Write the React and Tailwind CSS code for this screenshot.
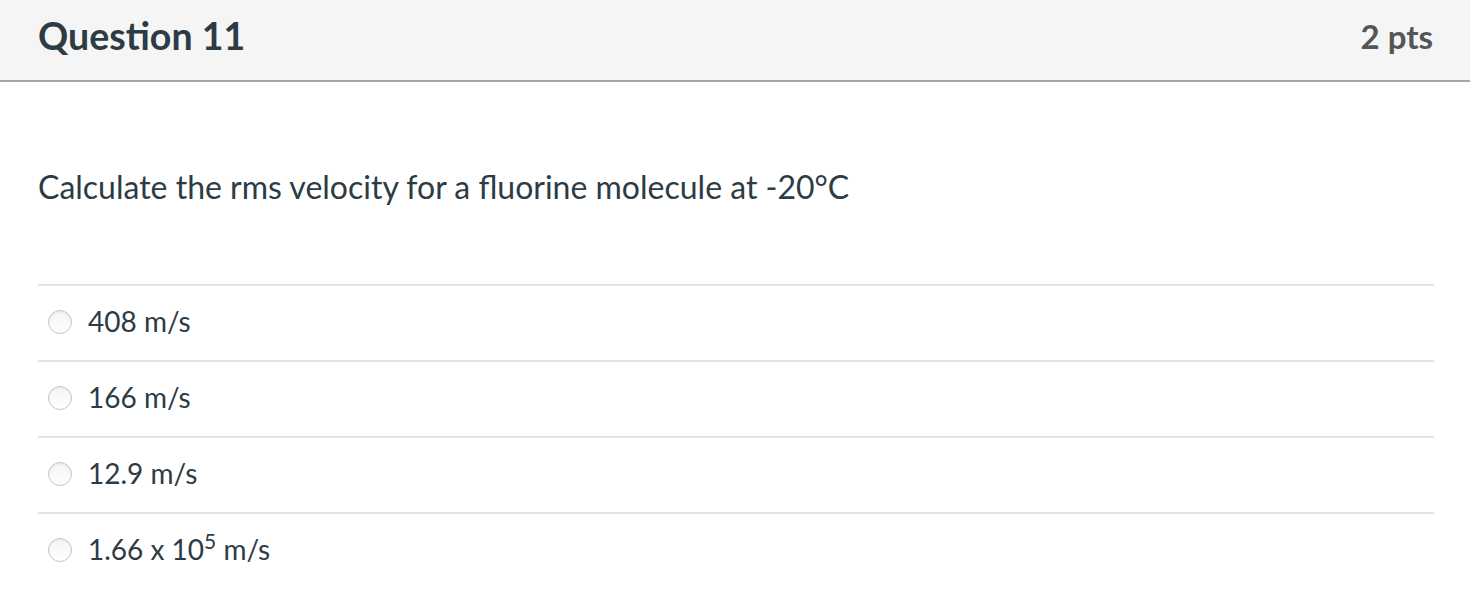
export default function App() {
  const answers = [
    <>408 m/s</>,
    <>166 m/s</>,
    <>12.9 m/s</>,
    <>1.66 x 10<sup className="text-[21px] relative top-[-11px]">5</sup> m/s</>,
  ];
  return (
    <div className="w-[1470px] h-[590px] bg-white text-[#2d3b45]" style={{ fontFamily: "Lato, 'Noto Sans', sans-serif" }}>
      <div className="h-[82px] bg-[#f5f5f5] border-b-2 border-[#a5a5a5] flex items-center justify-between pl-[38px] pr-[37px]">
        <div className="text-[37.5px] font-bold text-[#2d3b45] leading-none pb-[9px]">Question 11</div>
        <div className="text-[33px] font-bold text-[#555555] leading-none pb-[8px]">2 pts</div>
      </div>
      <div className="pl-[38px] pr-[36px]">
        <div className="h-[202px] pt-[85px] text-[32px] leading-[40px]">Calculate the rms velocity for a fluorine molecule at -20°C</div>
        <div className="flex flex-col">
          {answers.map((a, i) => (
            <div key={i} className="h-[76px] border-t-2 border-[#e3e3e3] flex items-center">
              <div className="ml-[10px] mt-[-2px] w-[24px] h-[24px] rounded-full border border-[#c6c6c6] bg-gradient-to-b from-[#f4f4f4] to-white shadow-[inset_0_1px_2px_rgba(0,0,0,0.06)]" />
              <div className="ml-[16px] text-[28px] leading-none text-[#2d3b45] pb-[5px]">{a}</div>
            </div>
          ))}
        </div>
      </div>
    </div>
  );
}
